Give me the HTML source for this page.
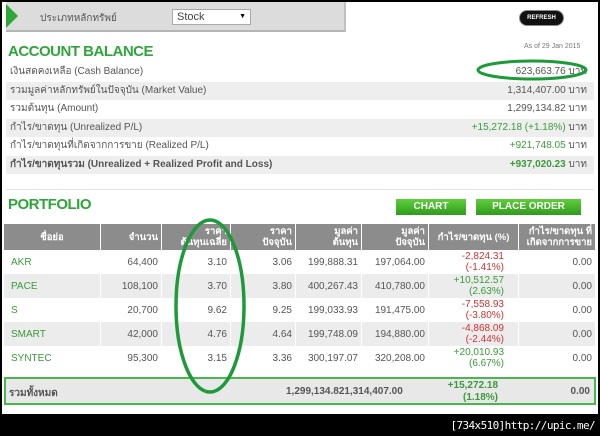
<!DOCTYPE html>
<html><head><meta charset="utf-8"><style>
*{margin:0;padding:0;box-sizing:border-box}
body{width:600px;height:436px;background:#000;position:relative;overflow:hidden;font-family:"Liberation Sans","Noto Sans CJK SC",sans-serif;}
#pg{position:absolute;left:2px;top:2px;width:596px;height:412px;background:#fff;}
.a{position:absolute}
.bar{left:4px;top:0;width:340px;height:30px;background:#dcdcdc;border-bottom:2px solid #b5b5b5;border-right:2px solid #c0c0c0}
.tri{left:4px;top:2px;width:0;height:0;border-top:12px solid transparent;border-bottom:12px solid transparent;border-left:12px solid #2fa53a}
.sel{left:170px;top:7px;width:79px;height:16px;background:#fff;border:1px solid #aaa;font-size:11px;color:#444;padding:1px 4px}
.ref{left:518px;top:9px;width:43px;height:14px;background:#111;border-radius:7px;color:#fff;font-size:6px;font-weight:bold;text-align:center;line-height:14px;box-shadow:0 0 0 1px #888}
h2{position:absolute;color:#2fa53a;font-size:15px;font-weight:bold;letter-spacing:-0.5px}
.r{position:absolute;left:4px;width:588px;height:18.5px;font-size:10px;color:#555;line-height:18px;padding:0 7px 0 4px}
.r span{float:right}
.s{background:#eeeeee}
.g{color:#3a9a3a}
table{position:absolute;left:1px;top:222px;width:593px;border-collapse:separate;border-spacing:1px 0;font-size:10px;color:#555;table-layout:fixed}
th{background:#8c8c8c;color:#fff;font-weight:bold;font-size:9.5px;height:26px;text-align:right;padding:0 3px;line-height:11px;overflow:hidden;white-space:nowrap}
td{height:24px;text-align:right;padding:0 3px;white-space:nowrap}
tr.sh td{background:#ececec}
td.n{text-align:left;color:#3a9a3a;padding-left:7px}
.red{color:#c33}
.btn{top:197px;height:16px;background:linear-gradient(#5fcf3c,#2f9a1d);color:#fff;font-size:10px;font-weight:bold;text-align:center;line-height:16px}
.tot{left:2px;top:375px;width:592px;height:28px;background:#e8e8e8;border:2px solid #4cb64c;font-size:10px;color:#555;font-weight:bold}
</style></head><body>
<div id="pg">
<div class="a bar"></div><div class="a tri"></div>
<div class="a" style="left:38px;top:9px;font-size:10px;color:#555">ประเภทหลักทรัพย์</div>
<div class="a sel">Stock<span style="float:right;font-size:7px;color:#000;margin-top:2px">▼</span></div>
<div class="a ref">REFRESH</div>
<h2 style="left:6px;top:41px">ACCOUNT BALANCE</h2>
<div class="a" style="left:522px;top:41px;font-size:7px;color:#777">As of 29 Jan 2015</div>
<div class="r" style="top:61px">เงินสดคงเหลือ (Cash Balance)<span>623,663.76 บาท</span></div>
<div class="r s" style="top:79.5px">รวมมูลค่าหลักทรัพย์ในปัจจุบัน (Market Value)<span>1,314,407.00 บาท</span></div>
<div class="r" style="top:98px">รวมต้นทุน (Amount)<span>1,299,134.82 บาท</span></div>
<div class="r s" style="top:116.5px">กำไร/ขาดทุน (Unrealized P/L)<span><b class="g" style="font-weight:normal">+15,272.18 (+1.18%)</b> บาท</span></div>
<div class="r" style="top:135px">กำไร/ขาดทุนที่เกิดจากการขาย (Realized P/L)<span><b class="g" style="font-weight:normal">+921,748.05</b> บาท</span></div>
<div class="r s" style="top:153.5px;font-weight:bold">กำไร/ขาดทุนรวม (Unrealized + Realized Profit and Loss)<span><b class="g">+937,020.23</b> <span style="float:none;font-weight:normal">บาท</span></span></div>
<div class="a" style="left:4px;top:187px;width:588px;height:1px;background:#e4e4e4"></div>
<h2 style="left:6px;top:194px">PORTFOLIO</h2>
<div class="a btn" style="left:394px;width:70px">CHART</div>
<div class="a btn" style="left:474px;width:105px">PLACE ORDER</div>
<table>
<colgroup><col style="width:96px"><col style="width:60px"><col style="width:68px"><col style="width:64px"><col style="width:65px"><col style="width:66px"><col style="width:89px"><col></colgroup>
<tr><th style="text-align:center">ชื่อย่อ</th><th>จำนวน</th><th>ราคา<br>ต้นทุนเฉลี่ย</th><th>ราคา<br>ปัจจุบัน</th><th>มูลค่า<br>ต้นทุน</th><th>มูลค่า<br>ปัจจุบัน</th><th style="text-align:center">กำไร/ขาดทุน (%)</th><th>กำไร/ขาดทุน ที่<br>เกิดจากการขาย</th></tr>
<tr><td class="n">AKR</td><td>64,400</td><td>3.10</td><td>3.06</td><td>199,888.31</td><td>197,064.00</td><td class="red" style="line-height:11px;padding-right:14px">-2,824.31<br>(-1.41%)</td><td>0.00</td></tr>
<tr class="sh"><td class="n">PACE</td><td>108,100</td><td>3.70</td><td>3.80</td><td>400,267.43</td><td>410,780.00</td><td class="g" style="line-height:11px;padding-right:14px">+10,512.57<br>(2.63%)</td><td>0.00</td></tr>
<tr><td class="n">S</td><td>20,700</td><td>9.62</td><td>9.25</td><td>199,033.93</td><td>191,475.00</td><td class="red" style="line-height:11px;padding-right:14px">-7,558.93<br>(-3.80%)</td><td>0.00</td></tr>
<tr class="sh"><td class="n">SMART</td><td>42,000</td><td>4.76</td><td>4.64</td><td>199,748.09</td><td>194,880.00</td><td class="red" style="line-height:11px;padding-right:14px">-4,868.09<br>(-2.44%)</td><td>0.00</td></tr>
<tr><td class="n">SYNTEC</td><td>95,300</td><td>3.15</td><td>3.36</td><td>300,197.07</td><td>320,208.00</td><td class="g" style="line-height:11px;padding-right:14px">+20,010.93<br>(6.67%)</td><td>0.00</td></tr>
</table>
<div class="a tot">
<div class="a" style="left:3px;top:7px">รวมทั้งหมด</div>
<div class="a" style="left:280px;top:7px">1,299,134.821,314,407.00</div>
<div class="a g" style="right:96px;top:1px;text-align:right;line-height:12px;white-space:nowrap">+15,272.18<br>(1.18%)</div>
<div class="a" style="right:4px;top:7px">0.00</div>
</div>
<svg class="a" style="left:0;top:0" width="596" height="412">
<ellipse cx="530" cy="68" rx="54" ry="9" fill="none" stroke="#1e9a3a" stroke-width="3"/>
<ellipse cx="208" cy="304" rx="34" ry="86" fill="none" stroke="#1e9a3a" stroke-width="3.5"/>
</svg>
</div>
<div class="a" style="right:5px;top:419px;color:#fff;font-size:11px;font-family:'DejaVu Sans Mono',monospace;letter-spacing:-0.6px">[734x510]http://upic.me/</div>
</body></html>
